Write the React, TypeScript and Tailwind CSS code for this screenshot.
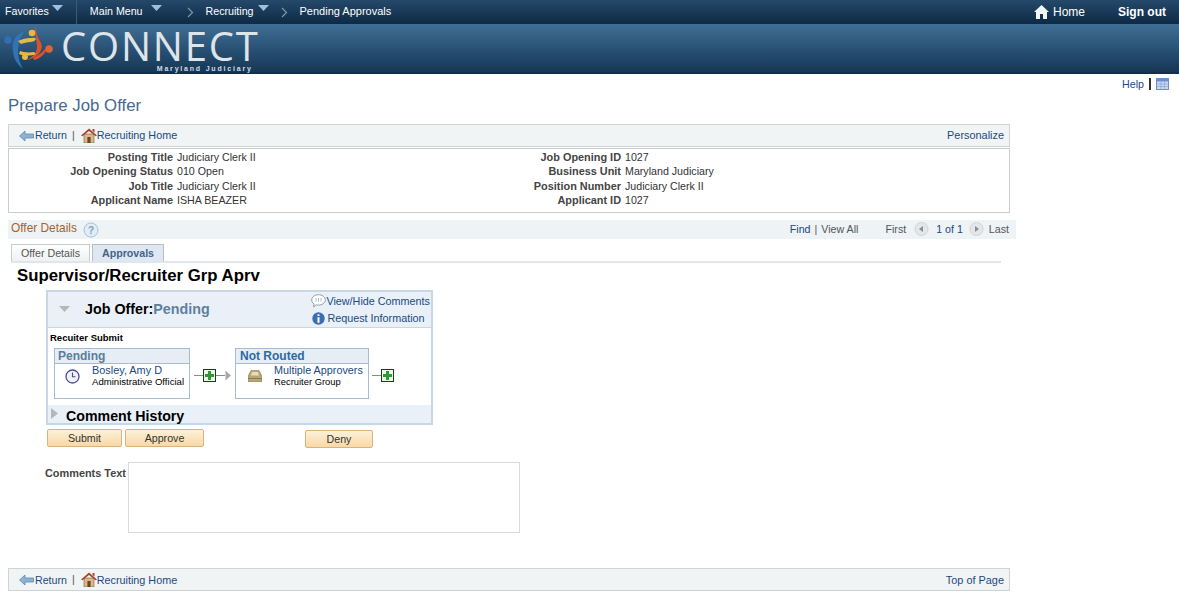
import React from "react";

const Caret = () => (
  <svg width="11" height="6" viewBox="0 0 11 6" className="block"><path d="M0 0h11L5.5 6z" fill="#9fc0dc" /></svg>
);
const Chevron = () => (
  <svg width="7" height="11" viewBox="0 0 7 11" className="block"><path d="M1 1l4.5 4.5L1 10" fill="none" stroke="#7f98ad" strokeWidth="1.2" /></svg>
);
const ReturnIcon = () => (
  <svg width="15" height="12" viewBox="0 0 15 12" className="block"><path d="M0.5 6L6 1v3h8.5v4H6v3z" fill="#8fb2d3" stroke="#5e88ae" strokeWidth="0.8" /></svg>
);
const HouseIcon = () => (
  <svg width="16" height="15" viewBox="0 0 16 15" className="block">
    <path d="M3 6h10v9H3z" fill="#d9b98c" stroke="#7a5a32" strokeWidth="0.6" />
    <path d="M0 7.5L8 0.5l8 7-1.5 0.8L8 3 1.5 8.3z" fill="#a9452c" />
    <path d="M11.5 1h2v3.5l-2-1.6z" fill="#a9452c" />
    <path d="M6.4 9h3.2v6H6.4z" fill="#6b4524" />
  </svg>
);
const PlusBox = () => (
  <span className="flex h-[13px] w-[13px] items-center justify-center border border-[#1c3a1c] bg-[#eef7ea]">
    <svg width="9" height="9" viewBox="0 0 9 9" className="block"><path d="M3 0h3v3h3v3H6v3H3V6H0V3h3z" fill="#2f9a35" /></svg>
  </span>
);
const Connector = () => <span className="h-px w-[9px] bg-[#8a8a8a]" />;
const RoundArrow = ({ dir }: { dir: "l" | "r" }) => (
  <svg width="15" height="15" viewBox="0 0 15 15" className="block">
    <circle cx="7.5" cy="7" r="6.5" fill="#e4e6e8" stroke="#d0d3d6" />
    <path d={dir === "l" ? "M9 4v6L5 7z" : "M6 4v6l4-3z"} fill="#8b8f93" />
  </svg>
);

function Toolbar({ right, bottom }: { right: string; bottom?: boolean }) {
  return (
    <div className="flex h-[23px] w-[1002px] items-center justify-between border border-[#cfd3d3] bg-[#f1f4f5] pl-[10px] pr-[5px] text-[#1a4a80]">
      <div className="flex items-center">
        <ReturnIcon />
        <span className={bottom ? "ml-px mt-px" : "ml-px mb-px"}>Return</span>
        <span className="ml-[5px] mr-[6px] text-[#555]">|</span>
        <HouseIcon />
        <span className={bottom ? "mt-px whitespace-nowrap text-[10.8px]" : "mb-px whitespace-nowrap text-[10.8px]"}>Recruiting Home</span>
      </div>
      <span className={bottom ? "mt-px text-[10.9px]" : "text-[10.9px]"}>{right}</span>
    </div>
  );
}

const info = [
  ["Posting Title", "Judiciary Clerk II", "Job Opening ID", "1027"],
  ["Job Opening Status", "010 Open", "Business Unit", "Maryland Judiciary"],
  ["Job Title", "Judiciary Clerk II", "Position Number", "Judiciary Clerk II"],
  ["Applicant Name", "ISHA BEAZER", "Applicant ID", "1027"],
];

function Logo() {
  return (
    <svg width="54" height="50" viewBox="2 24 54 50" className="block shrink-0">
      <path d="M25 31C15 34 11 42 13 52c1 7 4 12 10 17-3-6-5-11-5-17 0-8 2-15 7-21z" fill="#2f74b5" />
      <circle cx="8" cy="40" r="3.8" fill="#2f6fb5" />
      <path d="M35 25c1 8 3 13 6 18 3 6-2 14-14 17 7-4 10-8 10-13 0-8-3-14-2-22z" fill="#d8532b" />
      <path d="M33 58c4-2 9-5 12-9l1 2c-3 5-7 8-12 9z" fill="#d8532b" />
      <circle cx="49" cy="49" r="3.8" fill="#e4622f" />
      <circle cx="32" cy="33" r="3.3" fill="#e8b93e" />
      <path d="M18 41c4-2 9-3 12-3 3 0 5-1 6 1-1 2-3 3-6 3-3 0-6 1-9 2z" fill="#e8b93e" />
      <circle cx="25" cy="57" r="3" fill="#e8b93e" />
      <path d="M20 51c3 1 8 2 14 1l2 2c-5 2-12 2-17 0z" fill="#e8b93e" />
    </svg>
  );
}

export default function App() {
  return (
    <div className="relative min-h-[608px] w-[1179px] overflow-hidden bg-white font-['Liberation_Sans',Arial,sans-serif] text-[10.67px] leading-none text-black">
      <div className="flex h-[24px] items-center justify-between bg-gradient-to-b from-[#25496a] to-[#0d2a45] text-white">
        <div className="flex h-full items-center">
          <span className="ml-[5px] pb-[2px]">Favorites</span>
          <span className="ml-[3px] mb-[8px]"><Caret /></span>
          <span className="ml-[13px] h-full w-px bg-[#3a5a78]" />
          <span className="ml-[13px] pb-[2px]">Main Menu</span>
          <span className="ml-[8px] mb-[8px]"><Caret /></span>
          <span className="ml-[25px]"><Chevron /></span>
          <span className="ml-[12px] pb-[2px]">Recruiting</span>
          <span className="ml-[4px] mb-[8px]"><Caret /></span>
          <span className="ml-[12px]"><Chevron /></span>
          <span className="ml-[12px] pb-[2px] text-[11px]">Pending Approvals</span>
        </div>
        <div className="flex items-center pr-[13px]">
          <svg width="15" height="14" viewBox="0 0 15 14" className="block"><path d="M7.5 0L15 7h-2v7H9V9H6v5H2V7H0z" fill="#f4f6f8" /></svg>
          <span className="ml-[4px] text-[12px]">Home</span>
          <span className="ml-[33px] text-[12px] font-bold">Sign out</span>
        </div>
      </div>

      <div className="flex h-[50px] items-start border-b-2 border-[#10304d] bg-gradient-to-b from-[#3f6f97] to-[#163755] pl-[2px]">
        <Logo />
        <div className="ml-[5px] flex flex-col items-end">
          <span className="mt-[3px] font-['Open_Sans',sans-serif] text-[40px] font-medium leading-[38px] tracking-[1.8px] text-[#dfe4e9]">CONNECT</span>
          <span className="mr-[7px] text-[7px] font-bold leading-[8px] tracking-[1.8px] text-[#d5dce3]">Maryland Judiciary</span>
        </div>
      </div>

      <div className="flex h-[18px] items-center justify-end pr-[10px] pt-[2px] text-[#1a4a80]">
        <span>Help</span>
        <span className="ml-[5px] h-[12px] w-[2px] bg-[#333]" />
        <svg width="13" height="12" viewBox="0 0 13 12" className="ml-[5px] block">
          <rect x="0.5" y="0.5" width="12" height="11" fill="#c9d8f3" stroke="#6f8fcb" />
          <rect x="1" y="1" width="11" height="2.5" fill="#6f8fcb" />
          <path d="M1 6h11M1 8.5h11M5 3.5V11M8.5 3.5V11" stroke="#8aa5d8" strokeWidth="0.7" />
        </svg>
      </div>

      <h1 className="ml-[8px] mt-[5px] text-[16.8px] font-normal leading-[18px] text-[#47698f]">Prepare Job Offer</h1>

      <div className="ml-[8px] mt-[9px]"><Toolbar right="Personalize" /></div>

      <div className="ml-[8px] mt-[1px] grid h-[65px] w-[1002px] grid-cols-[164px_268px_172px_1fr] content-start gap-x-[4px] border border-[#c8cccc] pt-px leading-[14.3px] text-[#333]">
        {info.map((r) => (
          <React.Fragment key={r[0]}>
            <span className="text-right text-[10.9px] font-bold text-[#444]">{r[0]}</span>
            <span>{r[1]}</span>
            <span className="text-right text-[10.9px] font-bold text-[#444]">{r[2]}</span>
            <span>{r[3]}</span>
          </React.Fragment>
        ))}
      </div>

      <div className="ml-[8px] mt-[7px] flex h-[19px] w-[1008px] items-center justify-between bg-[#eef3f5] pl-[3px] pr-[7px]">
        <div className="flex items-center">
          <span className="mb-[2px] text-[11.9px] text-[#a8622f]">Offer Details</span>
          <svg width="16" height="16" viewBox="0 0 16 16" className="ml-[6px] block">
            <circle cx="8" cy="8" r="7" fill="#e3ebf5" stroke="#a9bfdc" />
            <text x="8" y="11.5" textAnchor="middle" fontSize="10" fontWeight="bold" fill="#7f9fc9" fontFamily="Liberation Sans">?</text>
          </svg>
        </div>
        <div className="flex items-center text-[#555]">
          <span className="text-[#1a4a80]">Find</span>
          <span className="mx-[4px]">|</span>
          <span>View All</span>
          <span className="ml-[27px]">First</span>
          <span className="ml-[8px]"><RoundArrow dir="l" /></span>
          <span className="ml-[7px] text-[#1a4a80]">1 of 1</span>
          <span className="ml-[6px]"><RoundArrow dir="r" /></span>
          <span className="ml-[5px]">Last</span>
        </div>
      </div>

      <div className="ml-[11px] mt-[5px] flex h-[19px] w-[990px] items-end gap-[2px] border-b-2 border-[#dfe7ee]">
        <span className="flex h-[17px] w-[79px] items-center justify-center border border-b-0 border-[#c5cccf] bg-gradient-to-b from-white to-[#eef1f2] text-[#555]">Offer Details</span>
        <span className="flex h-[17px] w-[72px] items-center justify-center border border-b-0 border-[#b3c0cc] bg-[#dfe8f2] font-bold text-[#44648a]">Approvals</span>
      </div>

      <h2 className="ml-[17px] mt-[4px] text-[16.8px] font-bold leading-[18px]">Supervisor/Recruiter Grp Aprv</h2>

      <div className="ml-[46px] mt-[5px] w-[387px] border-2 border-[#c9d6e4]">
        <div className="flex h-[36px] items-center justify-between border-b border-[#c9d6e4] bg-[#e9f0f8] pr-px">
          <div className="flex items-center">
            <svg width="11" height="6" viewBox="0 0 11 6" className="ml-[11px] block"><path d="M0 0h11L5.5 6z" fill="#b5b8bb" /></svg>
            <span className="ml-[15px] text-[14.3px] font-bold">Job Offer:</span>
            <span className="text-[14.3px] font-bold text-[#5f7f9c]">Pending</span>
          </div>
          <div className="flex flex-col gap-[4px] text-[10.8px] text-[#1a4a80]">
            <div className="flex items-center">
              <svg width="15" height="14" viewBox="0 0 15 14" className="block">
                <path d="M7.5 0.7c3.6 0 6.8 2.3 6.8 5.2s-3.2 5.2-6.8 5.2c-.8 0-1.5-.1-2.2-.3L2.5 13l.6-3C1.600 9 .7 7.500 .7 5.900.7 3 3.900 .7 7.500 .7z" fill="#fff" stroke="#8c9399" strokeWidth="0.9" />
                <path d="M5 4v3.500M7.500 4v3.500M10 4v3.500" stroke="#a8bfdc" />
              </svg>
              <span className="whitespace-nowrap">View/Hide Comments</span>
            </div>
            <div className="flex items-center pl-px">
              <svg width="13" height="13" viewBox="0 0 13 13" className="block">
                <circle cx="6.500" cy="6.500" r="6.200" fill="#3c6fb0" />
                <path d="M5.500 2.300h2v1.800h-2zM5.500 5.200h2v5.500h-2z" fill="#fff" />
              </svg>
              <span className="ml-[2px]">Request Information</span>
            </div>
          </div>
        </div>

        <div className="h-[77px] bg-white pl-[2px] pt-[5px]">
          <div className="text-[9.5px] font-bold leading-[10px]">Recuiter Submit</div>
          <div className="ml-[4px] mt-[5px] flex items-start">
            <div className="w-[136px] border border-[#a8bcd0]">
              <div className="h-[15px] border-b border-[#a8bcd0] bg-[#e6edf5] pl-[3px] text-[12px] font-bold leading-[15px] text-[#5a7d9c]">Pending</div>
              <div className="flex h-[34px]">
                <svg width="15" height="15" viewBox="0 0 15 15" className="ml-[10px] mt-[5px] block">
                  <circle cx="7.500" cy="7.500" r="6.500" fill="#eef1fa" stroke="#4a4f8c" strokeWidth="1.300" />
                  <path d="M7.500 3.500v4.300h3" fill="none" stroke="#4a4f8c" strokeWidth="1.100" />
                </svg>
                <div className="ml-[12px] pt-px">
                  <div className="text-[10.9px] text-[#1a4a80]">Bosley, Amy D</div>
                  <div className="mt-px whitespace-nowrap text-[9.6px] leading-[10px]">Administrative Official</div>
                </div>
              </div>
            </div>
            <div className="ml-[4px] mt-[21px] flex items-center">
              <Connector />
              <PlusBox />
              <svg width="15" height="11" viewBox="0 0 15 11" className="block">
                <path d="M0 5.500h9" stroke="#8a8a8a" />
                <path d="M9.500 0.500l5.500 5-5.500 5z" fill="#a9a9a9" />
              </svg>
            </div>
            <div className="ml-[4px] w-[134px] border border-[#a8bcd0]">
              <div className="h-[15px] border-b border-[#a8bcd0] bg-[#e6edf5] pl-[4px] text-[12px] font-bold leading-[15px] text-[#2a6aa5]">Not Routed</div>
              <div className="flex h-[34px]">
                <svg width="14" height="12" viewBox="0 0 14 12" className="ml-[12px] mt-[6px] block">
                  <path d="M0 6l3-5.500h8L14 6v6H0z" fill="#b7a776" stroke="#7d7048" strokeWidth="0.500" />
                  <path d="M3 5.500l1-3.500h6l1 3.500z" fill="#e7dcb4" />
                  <path d="M0 8.500h14" stroke="#8a7c50" />
                </svg>
                <div className="ml-[12px] pt-px">
                  <div className="whitespace-nowrap text-[10.8px] text-[#1a4a80]">Multiple Approvers</div>
                  <div className="mt-px text-[9.4px] leading-[10px]">Recruiter Group</div>
                </div>
              </div>
            </div>
            <div className="ml-[3px] mt-[21px] flex items-center">
              <Connector />
              <PlusBox />
            </div>
          </div>
        </div>

        <div className="flex h-[18px] items-center bg-[#e9f0f8]">
          <svg width="7" height="11" viewBox="0 0 7 11" className="ml-[3px] mb-[2px] block"><path d="M0 0l7 5.500L0 11z" fill="#b5b8bb" /></svg>
          <span className="ml-[8px] mt-[4px] text-[14.2px] font-bold">Comment History</span>
        </div>
      </div>

      <div className="ml-[47px] mt-[4px] flex items-start">
        <button className="h-[18px] w-[75px] rounded-[2px] border border-[#d9b27c] bg-gradient-to-b from-[#fdf1d8] to-[#f8d9a6] text-[#333]">Submit</button>
        <button className="ml-[3px] h-[18px] w-[79px] rounded-[2px] border border-[#d9b27c] bg-gradient-to-b from-[#fdf1d8] to-[#f8d9a6] text-[#333]">Approve</button>
        <button className="ml-[101px] mt-px h-[18px] w-[68px] rounded-[2px] border border-[#d9b27c] bg-gradient-to-b from-[#fdf1d8] to-[#f8d9a6] text-[#333]">Deny</button>
      </div>

      <div className="ml-[45px] mt-[14px] flex items-start">
        <span className="mt-[6px] whitespace-nowrap text-[10.9px] font-bold text-[#444]">Comments Text</span>
        <div className="ml-[2px] h-[71px] w-[392px] border border-[#d8dbdd] bg-white" />
      </div>

      <div className="ml-[8px] mt-[35px]"><Toolbar right="Top of Page" bottom /></div>
    </div>
  );
}
